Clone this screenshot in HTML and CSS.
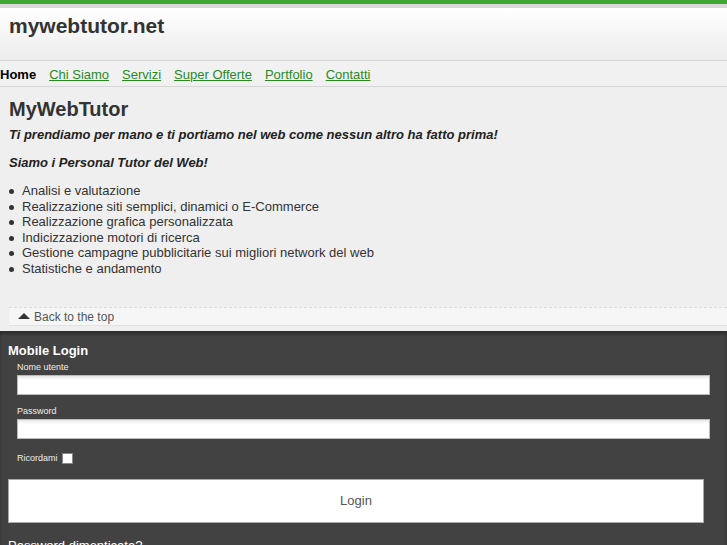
FILE: index.html
```html
<!DOCTYPE html>
<html lang="it">
<head>
  <meta charset="UTF-8">
  <title>mywebtutor.net</title>
  <meta name="viewport" content="width=device-width, initial-scale=1.0">
  <link rel="stylesheet" href="styles.css">
</head>
<body>

<!-- HEADER -->
<div class="topbar"></div>
<div class="header">
  <h1>mywebtutor.net</h1>
</div>

<!-- NAV -->
<div class="nav">
  <span class="current">Home</span>
  <a href="#">Chi Siamo</a>
  <a href="#">Servizi</a>
  <a href="#">Super Offerte</a>
  <a href="#">Portfolio</a>
  <a href="#">Contatti</a>
</div>

<!-- CONTENT -->
<div class="content">
  <h2>MyWebTutor</h2>
  <p class="claim">Ti prendiamo per mano e ti portiamo nel web come nessun altro ha fatto prima!</p>
  <p class="claim">Siamo i Personal Tutor del Web!</p>
  <ul class="services">
    <li>Analisi e valutazione</li>
    <li>Realizzazione siti semplici, dinamici o E-Commerce</li>
    <li>Realizzazione grafica personalizzata</li>
    <li>Indicizzazione motori di ricerca</li>
    <li>Gestione campagne pubblicitarie sui migliori network del web</li>
    <li>Statistiche e andamento</li>
  </ul>
  <div class="backtop"><span class="arrow"></span>Back to the top</div>
</div>

<!-- LOGIN -->
<div class="login">
  <h3>Mobile Login</h3>
  <div class="fields">
    <label for="user">Nome utente</label>
    <input type="text" id="user">
    <label for="pass">Password</label>
    <input type="password" id="pass">
    <div class="remember">
      <label for="rem">Ricordami</label>
      <input type="checkbox" id="rem">
    </div>
  </div>
  <button class="loginBtn">Login</button>
  <a class="forgot" href="#">Password dimenticata?</a>
</div>

</body>
</html>
```

FILE: styles.css
```css
* { margin: 0; padding: 0; box-sizing: border-box; }
body {
  font-family: "Liberation Sans", Arial, sans-serif;
  background-color: #efefef;
  color: #222;
  overflow: hidden;
}

.topbar {
  height: 8px;
  background: #3fa535;
  border-bottom: 4px solid #d9d9d9;
}

.header {
  height: 53px;
  background: linear-gradient(to bottom, #ffffff, #ececec);
  border-bottom: 1px solid #d4d4d4;
  padding: 6px 9px 0;
}
.header h1 {
  font-size: 21px;
  font-weight: bold;
  color: #333;
  line-height: 24px;
}

.nav {
  height: 26px;
  padding-top: 2px;
  display: flex;
  align-items: center;
  gap: 13px;
  font-size: 13px;
  border-bottom: 1px solid #d6d6d6;
  background: #f1f1f1;
}
.nav .current {
  font-weight: bold;
  color: #000;
}
.nav a {
  color: #2b8a1f;
  text-decoration: underline;
}

.content {
  padding: 10px 0 5px 9px;
}
.content h2 {
  font-size: 20px;
  color: #333;
  line-height: 24px;
  margin-bottom: 6px;
}
.claim {
  font-size: 13px;
  font-weight: bold;
  font-style: italic;
  color: #222;
  line-height: 16px;
  margin-bottom: 12px;
}
.services {
  list-style: none;
  font-size: 13px;
  color: #333;
  line-height: 15.6px;
  margin-top: 12px;
}
.services li {
  position: relative;
  padding-left: 13px;
}
.services li::before {
  content: "";
  position: absolute;
  left: 0;
  top: 6px;
  width: 5px;
  height: 5px;
  border-radius: 50%;
  background: #333;
}

.backtop {
  margin-top: 30px;
  height: 19px;
  padding: 1px 0 0 9px;
  background: #f6f6f6;
  border-top: 1px dashed #dcdcdc;
  border-bottom: 1px solid #e2e2e2;
  font-size: 12px;
  color: #555;
  line-height: 16px;
}
.backtop .arrow {
  display: inline-block;
  width: 0;
  height: 0;
  border-left: 6px solid transparent;
  border-right: 6px solid transparent;
  border-bottom: 6px solid #333;
  margin-right: 4px;
  vertical-align: 2px;
}

.login {
  background: #424242;
  box-shadow: inset 0 3px 3px #2e2e2e;
  padding: 12px 0 0 8px;
  color: #fff;
  height: 230px;
}
.login h3 {
  font-size: 13px;
  font-weight: bold;
  line-height: 16px;
  margin-bottom: 3px;
}
.fields {
  padding: 0 17px 0 9px;
  display: flex;
  flex-direction: column;
}
.fields label {
  font-size: 9px;
  color: #eee;
  line-height: 11px;
}
.fields input[type="text"],
.fields input[type="password"] {
  height: 20px;
  width: 100%;
  border: 1px solid #bbb;
  background: linear-gradient(to bottom, #e6e6e6, #ffffff 4px);
  margin: 2px 0 11px;
}
.remember {
  display: flex;
  align-items: center;
  gap: 4px;
  margin-top: 3px;
}
.remember input {
  appearance: none;
  width: 11px;
  height: 11px;
  background: #fff;
  border: 1px solid #888;
  margin: 0;
}

.loginBtn {
  display: block;
  width: 696px;
  height: 44px;
  margin-top: 15px;
  background: #fff;
  border: 1px solid #aaa;
  font-family: inherit;
  font-size: 13px;
  color: #555;
}

.forgot {
  display: block;
  margin-top: 15px;
  font-size: 13px;
  color: #fff;
  text-decoration: none;
}
```
